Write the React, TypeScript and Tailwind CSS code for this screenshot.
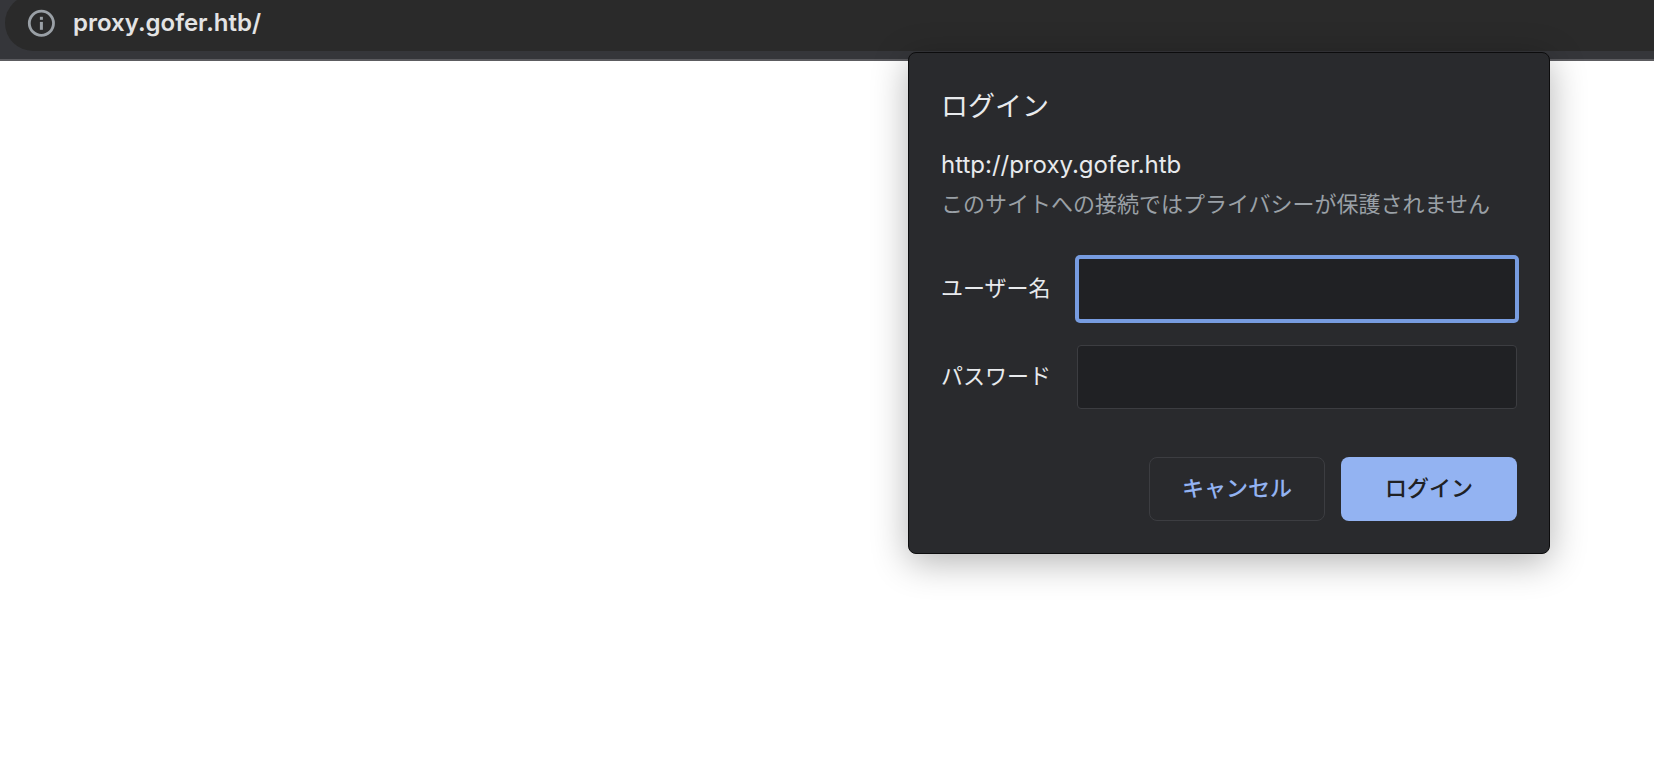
import React from "react";

function InfoIcon() {
  return (
    <svg viewBox="0 0 28 28" className="size-7 shrink-0" aria-hidden="true">
      <circle cx="14.4" cy="14.3" r="12.1" fill="none" stroke="#9aa0a6" strokeWidth="2.8" />
      <rect x="12.9" y="7.8" width="3" height="3" fill="#9aa0a6" />
      <rect x="12.9" y="12.9" width="3" height="7.9" fill="#9aa0a6" />
    </svg>
  );
}

function AddressBar() {
  return (
    <header className="overflow-hidden border-b-2 border-[#5c5c60] bg-[#35363a] pb-2 pl-[5px]">
      <div className="-mt-[5px] flex h-14 items-center gap-[18px] rounded-l-full bg-[#2a2a2a] pl-[22px]">
        <button type="button" aria-label="サイト情報" className="flex items-center">
          <InfoIcon />
        </button>
        <input
          type="text"
          aria-label="アドレス"
          defaultValue="proxy.gofer.htb/"
          className="h-9 min-w-0 flex-1 bg-transparent pb-0.5 text-2xl font-semibold text-[#e3e3e4] outline-none"
        />
      </div>
    </header>
  );
}

function LoginDialog() {
  return (
    <section
      role="dialog"
      aria-labelledby="login-title"
      className="absolute top-[52px] right-[104px] w-full max-w-[642px] rounded-lg border border-[#0c0c0d] bg-[#292a2d] p-8 text-[22px] text-[#e8eaed] shadow-[0_8px_36px_rgba(0,0,0,0.3)]"
    >
      <h1 id="login-title" className="text-[27px] leading-[44px]">
        ログイン
      </h1>
      <p className="mt-[18px] text-2xl leading-9">http://proxy.gofer.htb</p>
      <p className="mt-1 leading-[34px] whitespace-nowrap text-[#9aa0a6]">
        このサイトへの接続ではプライバシーが保護されません
      </p>
      <form className="mt-9" onSubmit={(event) => event.preventDefault()}>
        <div className="grid grid-cols-[110px_1fr] items-center gap-x-[26px] gap-y-6">
          <label htmlFor="username" className="pb-0.5 whitespace-nowrap">
            ユーザー名
          </label>
          <input
            id="username"
            type="text"
            className="h-16 w-full min-w-0 rounded-[3px] border-2 border-[#779ce0] bg-[#202124] px-4 ring-2 ring-[#779ce0] outline-none"
          />
          <label htmlFor="password" className="pb-0.5 whitespace-nowrap">
            パスワード
          </label>
          <input
            id="password"
            type="password"
            className="h-16 w-full min-w-0 rounded border border-[#3c3d41] bg-[#202124] px-4 outline-none"
          />
        </div>
        <div className="mt-12 flex justify-end gap-4 font-medium">
          <button type="button" className="h-16 w-44 rounded-lg border border-[#3c3d41] pb-0.5 text-[#93b3f2]">
            キャンセル
          </button>
          <button type="submit" className="h-16 w-44 rounded-lg bg-[#93b3f2] pb-0.5 text-[#202124]">
            ログイン
          </button>
        </div>
      </form>
    </section>
  );
}

export default function App() {
  return (
    <div className="relative min-h-screen overflow-hidden bg-white font-['Inter','Noto_Sans_CJK_JP',sans-serif]">
      <AddressBar />
      <main>
        <LoginDialog />
      </main>
    </div>
  );
}
